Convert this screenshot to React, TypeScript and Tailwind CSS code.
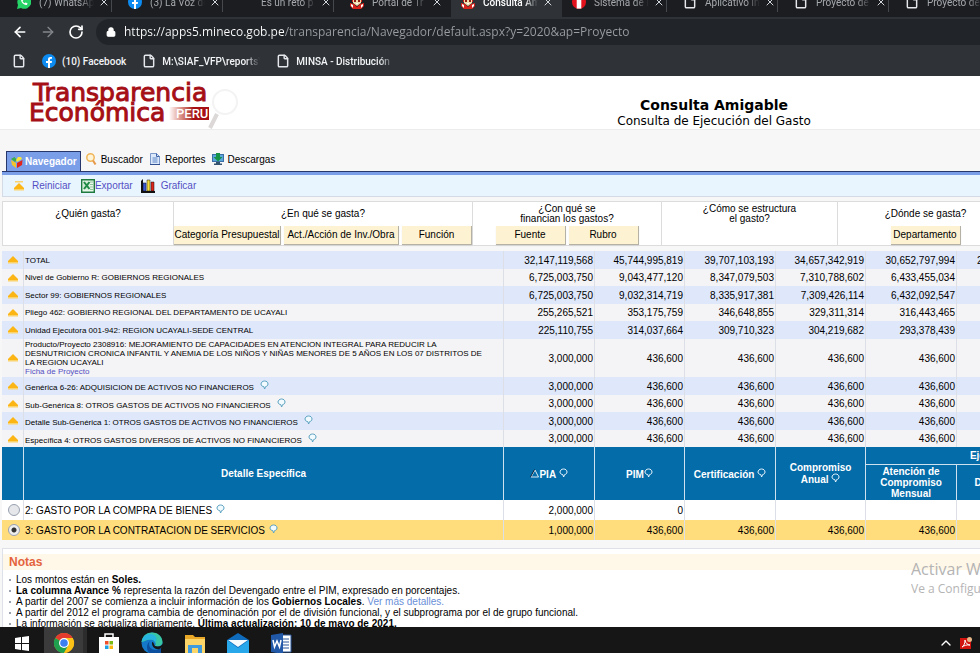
import type { ReactNode } from 'react'
import { ArrowLeft, ArrowRight, ChevronUp, File, Lock, RotateCw, X } from 'lucide-react'
import clsx from 'clsx'

/**
 * ICONS
 */
function WhatsappIcon() {
  return (
    <svg viewBox="0 0 14 14" className="size-3.5">
      <path d="M0 14l1-4A7 6.700 0 1 1 4 13z" fill="#25d366" />
      <path d="M4 4c0 4 3 6 6 6l.5-1.800-2-.8-.8.8C6.500 7.500 6 7 5.500 6l.8-.8-.8-2z" fill="#fff" />
    </svg>
  )
}

function FacebookIcon() {
  return (
    <svg viewBox="0 0 14 14" className="size-3.5">
      <circle cx="7" cy="7" r="7" fill="#0d8bf0" />
      <path d="M6 14V9H4V7h2V5.500C6 3.700 7 3 8.300 3H10v1.800H9c-.7 0-1 .3-1 .9V7h2l-.3 2H8v5z" fill="#fff" />
    </svg>
  )
}

function CrestIcon() {
  return (
    <svg viewBox="0 0 14 14" className="size-3.5">
      <path d="M2 0h10v7H2z" fill="#d9241c" />
      <path d="M3 4h8v4l-4 3-4-3z" fill="#f0dfae" />
      <path d="M4 5h2v2H4zM8 5h2v2H8z" fill="#8e1d16" />
      <path d="M0 8l4 1 3 3 3-3 4-1v3l-3 3H3l-3-3z" fill="#d9241c" />
      <path d="M1 9l2 1v3l-2-2zM13 9l-2 1v3l2-2zM6 8h2v1H6z" fill="#fff" />
    </svg>
  )
}

function PeruIcon() {
  return (
    <svg viewBox="0 0 14 14" className="size-3.5">
      <circle cx="7" cy="7" r="7" fill="#e3111b" />
      <path d="M4.700.4h4.600v13.200H4.700z" fill="#fff" />
    </svg>
  )
}

function PageIcon() {
  return <File className="size-3.5 text-gray-200" strokeWidth={2.500} />
}

function UpIcon() {
  return (
    <svg viewBox="0 0 12 10" className="h-2.5 w-3 shrink-0">
      <path d="M6 1l5 5v1H1V6z" fill="#fbb615" />
      <path d="M1 7h10v1.500H1z" fill="#fbd36d" />
    </svg>
  )
}

function ResetIcon() {
  return (
    <svg viewBox="0 0 12 10" className="h-2.5 w-3 shrink-0">
      <path d="M2 0h8v1.500H2z" fill="#fbd36d" />
      <path d="M6 2l5 5v1H1V7z" fill="#fbb615" />
      <path d="M1 8h10v1.500H1z" fill="#fbd36d" />
    </svg>
  )
}

function Balloon({ light = false }: { light?: boolean }) {
  return (
    <svg viewBox="0 0 9 10" className="inline-block h-2.5 w-[9px] shrink-0 align-baseline">
      <path
        d="M4.500 1C6.500 1 8 2.200 8 4S6.500 6.500 5.600 6.600L4.600 9 3.800 6.600C2.300 6.500 1 5.500 1 4s1.500-3 3.500-3z"
        fill={light ? 'none' : '#f2fbff'}
        stroke={light ? '#e8f4fd' : '#5ba2c0'}
      />
    </svg>
  )
}

function CubeIcon() {
  return (
    <svg viewBox="0 0 12 12" className="size-3">
      <path d="M3.500 1L6 4 4 6 0 3z" fill="#3cae49" />
      <path d="M7 1h3l1 2-5 3-1-2z" fill="#f7e53b" />
      <path d="M0 4l5 3v5L1 9z" fill="#f4c52b" />
      <path d="M11.500 4L6 7v5l5-3z" fill="#e2231a" />
    </svg>
  )
}

function SearchIcon() {
  return (
    <svg viewBox="0 0 12 12" className="size-3">
      <circle cx="5.500" cy="4.500" r="3.700" fill="#fff4d8" stroke="#f0b659" strokeWidth="1.500" />
      <path d="M8 7.500l2.500 4" stroke="#e79a4a" strokeWidth="2" />
    </svg>
  )
}

function ReportIcon() {
  return (
    <svg viewBox="0 0 12 12" className="size-3">
      <path d="M1.500.5h6l3 3v8h-9z" fill="#dbe9fb" stroke="#7d99c9" />
      <path d="M7.500.5v3h3" fill="none" stroke="#3f62a6" />
      <path d="M3.500 5h5M3.500 7h5M3.500 9h5" stroke="#5c86c6" />
      <path d="M1 11.500h10" stroke="#2f4f8f" />
    </svg>
  )
}

function DownloadIcon() {
  return (
    <svg viewBox="0 0 12 12" className="size-3">
      <path d="M0 1h12v8H0z" fill="#3c6ea6" />
      <path d="M1 2h10v6H1z" fill="#5aa5dc" />
      <path d="M4 0h4v4h2.500L6 8.500 1.500 4H4z" fill="#159447" />
      <path d="M4 9h4v1.500h2V12H2v-1.500h2z" fill="#35536f" />
    </svg>
  )
}

function ExcelIcon() {
  return (
    <svg viewBox="0 0 14 14" className="size-3.5">
      <path d="M.7.7h12.600v12.600H.7z" fill="#e9f6ea" stroke="#1f7a3f" strokeWidth="1.400" />
      <path d="M9 3h3M9 5.500h3M9 8h3M9 10.500h3" stroke="#8fc79b" />
      <path d="M2 2.500h6.500v8H2z" fill="#d3ecd6" />
      <path d="M3 3l5.500 7M8.500 3L3 10" stroke="#1f8a45" strokeWidth="2" />
    </svg>
  )
}

function ChartIcon() {
  return (
    <svg viewBox="0 0 14 14" className="size-3.5">
      <path d="M0 2l2-2v12h12v2H0z" fill="#111" />
      <path d="M2 4h3v8H2z" fill="#3857d6" stroke="#111" strokeWidth=".5" />
      <path d="M6 1h3v11H6z" fill="#f5de3b" stroke="#111" strokeWidth=".5" />
      <path d="M10 3h3v9h-3z" fill="#dd2418" stroke="#111" strokeWidth=".5" />
    </svg>
  )
}

/**
 * BROWSER CHROME
 */
const browserTabs: { title: string; icon: ReactNode; active?: boolean }[] = [
  { title: '(7) WhatsApp', icon: <WhatsappIcon /> },
  { title: '(3) La Voz de', icon: <FacebookIcon /> },
  { title: 'Es un reto p', icon: null },
  { title: 'Portal de Tr', icon: <CrestIcon /> },
  { title: 'Consulta Am', icon: <CrestIcon />, active: true },
  { title: 'Sistema de I', icon: <PeruIcon /> },
  { title: 'Aplicativo In', icon: <PageIcon /> },
  { title: 'Proyecto de', icon: <PageIcon /> },
  { title: 'Proyecto de', icon: <PageIcon /> },
]

function BrowserTabs() {
  return (
    <div className="flex h-[17px] shrink-0 items-end overflow-hidden bg-[#1b1d21] pl-[7px]">
      {browserTabs.map((tab, i) => (
        <div
          key={i}
          className={clsx(
            'flex h-[30px] w-[111px] shrink-0 items-center pr-1.5 pl-2.5 text-[10px]',
            tab.active ? 'rounded-t-lg bg-[#2f3338] font-medium text-white' : 'text-[#a6a9ad]'
          )}
        >
          <span className="mr-2 w-3.5 shrink-0">{tab.icon}</span>
          <span className="w-[55px] overflow-hidden whitespace-nowrap [mask-image:linear-gradient(90deg,#000_75%,transparent)]">
            {tab.title}
          </span>
          <button aria-label="Cerrar" className="ml-1 text-gray-300">
            <X className="size-3" />
          </button>
          {!tab.active && i !== 3 && <span className="ml-auto h-5 w-px shrink-0 bg-[#45484c]" />}
        </div>
      ))}
    </div>
  )
}

function AddressBar() {
  return (
    <div className="flex h-[30px] shrink-0 items-center bg-[#2f3338] pl-3 text-white">
      <button aria-label="Atrás" className="mr-3">
        <ArrowLeft className="size-4" strokeWidth={2.500} />
      </button>
      <button aria-label="Adelante" className="mr-3 text-[#84878b]">
        <ArrowRight className="size-4" strokeWidth={2} />
      </button>
      <button aria-label="Recargar" className="mr-3">
        <RotateCw className="size-4" strokeWidth={2.500} />
      </button>
      <div className="flex h-[26px] flex-1 items-center rounded-l-full bg-[#212529] pl-2.5">
        <Lock className="mr-2 size-2.5" fill="#fff" strokeWidth={3} />
        <input
          aria-label="Dirección"
          readOnly
          value="https://apps5.mineco.gob.pe/transparencia/Navegador/default.aspx?y=2020&ap=Proyecto"
          className="flex-1 bg-[linear-gradient(90deg,#ffffff_160px,#9a9ea2_160px)] bg-clip-text font-['Open_Sans'] text-xs text-transparent outline-none"
        />
      </div>
    </div>
  )
}

function Bookmarks() {
  return (
    <div className="flex h-[29px] shrink-0 items-center gap-4 bg-[#2f3338] pb-px pl-3 text-[10px] font-medium text-gray-100">
      <a href="#" aria-label="Marcador">
        <PageIcon />
      </a>
      <a href="#" className="flex items-center gap-1.5">
        <FacebookIcon />
        (10) Facebook
      </a>
      <a href="#" className="flex items-center gap-1.5">
        <PageIcon />
        <span className="w-[98px] overflow-hidden whitespace-nowrap [mask-image:linear-gradient(90deg,#000_85%,transparent)]">
          M:\SIAF_VFP\reports\
        </span>
      </a>
      <a href="#" className="flex items-center gap-1.5">
        <PageIcon />
        <span className="w-[98px] overflow-hidden whitespace-nowrap [mask-image:linear-gradient(90deg,#000_85%,transparent)]">
          MINSA - Distribución
        </span>
      </a>
    </div>
  )
}

/**
 * SITE HEADER
 */
function SiteHeader() {
  return (
    <header className="flex h-[54px] border-b border-[#ececec] bg-white">
      <div className="w-[448px] pt-[7px] pl-[29px]">
        <div className="relative w-[210px] font-['DejaVu_Sans'] text-[25px] leading-5 text-[#a50f15]">
          <svg viewBox="0 0 36 46" className="absolute top-1 left-[174px] h-[46px] w-9" fill="none">
            <circle cx="22" cy="15" r="12" stroke="#f3f3f3" strokeWidth="2" />
            <path d="M14 27L7 41" stroke="#dcd8d8" strokeWidth="4" />
          </svg>
          <div className="relative pl-1 [-webkit-text-stroke:1px_#a50f15]">Transparencia</div>
          <div className="relative flex items-center">
            <span className="[-webkit-text-stroke:1px_#a50f15]">Económica</span>
            <span className="ml-1 w-10 shrink-0 bg-linear-to-r from-white to-[#a50f15] to-60% pr-px text-right font-['Roboto'] text-[13px] leading-[13px] font-medium text-white">
              PERU
            </span>
          </div>
        </div>
      </div>
      <div className="flex-1 pt-5 text-center font-['DejaVu_Sans'] text-black">
        <h1 className="text-sm leading-[18px] font-bold">Consulta Amigable</h1>
        <p className="text-xs leading-[14px]">Consulta de Ejecución del Gasto</p>
      </div>
    </header>
  )
}

const sections = [
  { label: 'Buscador', icon: <SearchIcon /> },
  { label: 'Reportes', icon: <ReportIcon /> },
  { label: 'Descargas', icon: <DownloadIcon /> },
]

function SectionTabs() {
  return (
    <nav className="mt-[21px] ml-0.5">
      <div className="flex items-end border-b border-[#27366b] pl-1">
        <a
          href="#"
          className="flex h-5 items-center gap-0.5 border border-b-0 border-[#27366b] bg-[#7b9ee8] pr-[3px] pl-1 text-[10px] font-bold text-white"
        >
          <CubeIcon />
          Navegador
        </a>
        {sections.map(({ label, icon }) => (
          <a key={label} href="#" className="flex h-5 items-center gap-1 pr-0.5 pb-1 pl-1 text-[10px] text-black">
            {icon}
            {label}
          </a>
        ))}
      </div>
      <div className="h-[3px] bg-[#7b9ee8]" />
      <div className="flex h-[22px] items-center border-b border-l border-[#d5dbe4] bg-[#e9f5fe] pl-2.5 text-[10px] text-[#5450c4]">
        <a href="#" className="mr-2.5 flex items-center gap-[7px]">
          <ResetIcon />
          Reiniciar
        </a>
        <a href="#" className="mr-2 flex items-center">
          <ExcelIcon />
          Exportar
        </a>
        <a href="#" className="flex items-center gap-1.5">
          <ChartIcon />
          Graficar
        </a>
      </div>
    </nav>
  )
}

/**
 * QUESTIONS
 */
const questions = [
  { width: 'w-[171px]', lines: ['¿Quién gasta?'], buttons: [] },
  {
    width: 'w-[299px]',
    lines: ['¿En qué se gasta?'],
    buttons: [
      { label: 'Categoría Presupuestal', width: 'w-[107px]' },
      { label: 'Act./Acción de Inv./Obra', width: 'w-[115px]' },
      { label: 'Función', width: 'w-[70px]' },
    ],
  },
  {
    width: 'w-[189px]',
    lines: ['¿Con qué se', 'financian los gastos?'],
    buttons: [
      { label: 'Fuente', width: 'w-[70px]' },
      { label: 'Rubro', width: 'w-[70px]' },
    ],
  },
  { width: 'w-[176px]', lines: ['¿Cómo se estructura', 'el gasto?'], buttons: [] },
  { width: 'w-[176px]', lines: ['¿Dónde se gasta?'], buttons: [{ label: 'Departamento', width: 'w-[70px]' }] },
]

function Questions() {
  return (
    <div className="mt-1 ml-0.5 flex h-[45px] border-y border-l border-[#dcdcdc] bg-white text-[10px] leading-[10px] text-black">
      {questions.map(({ width, lines, buttons }) => (
        <div key={lines[0]} className={clsx('shrink-0 border-r border-[#dcdcdc] text-center', width)}>
          <div className="flex h-6 flex-col justify-center">
            {lines.map((line) => (
              <span key={line}>{line}</span>
            ))}
          </div>
          <div className="flex justify-center gap-[3px]">
            {buttons.map((button) => (
              <button
                key={button.label}
                className={clsx(
                  'h-[19px] border-r border-b border-[#b5b1a4] bg-[#fdf3d3] whitespace-nowrap shadow-xs',
                  button.width
                )}
              >
                {button.label}
              </button>
            ))}
          </div>
        </div>
      ))}
    </div>
  )
}

/**
 * BUDGET TABLE
 */
type Row = { label: string; values: string[]; balloon?: boolean; link?: string }

const project = ['3,000,000', '436,600', '436,600', '436,600', '436,600']

const rows: Row[] = [
  {
    label: 'TOTAL',
    values: ['32,147,119,568', '45,744,995,819', '39,707,103,193', '34,657,342,919', '30,652,797,994'],
  },
  {
    label: 'Nivel de Gobierno R: GOBIERNOS REGIONALES',
    values: ['6,725,003,750', '9,043,477,120', '8,347,079,503', '7,310,788,602', '6,433,455,034'],
  },
  {
    label: 'Sector 99: GOBIERNOS REGIONALES',
    values: ['6,725,003,750', '9,032,314,719', '8,335,917,381', '7,309,426,114', '6,432,092,547'],
  },
  {
    label: 'Pliego 462: GOBIERNO REGIONAL DEL DEPARTAMENTO DE UCAYALI',
    values: ['255,265,521', '353,175,759', '346,648,855', '329,311,314', '316,443,465'],
  },
  {
    label: 'Unidad Ejecutora 001-942: REGION UCAYALI-SEDE CENTRAL',
    values: ['225,110,755', '314,037,664', '309,710,323', '304,219,682', '293,378,439'],
  },
  {
    label:
      'Producto/Proyecto 2308916: MEJORAMIENTO DE CAPACIDADES EN ATENCION INTEGRAL PARA REDUCIR LA DESNUTRICION CRONICA INFANTIL Y ANEMIA DE LOS NIÑOS Y NIÑAS MENORES DE 5 AÑOS EN LOS 07 DISTRITOS DE LA REGION UCAYALI',
    values: project,
    link: 'Ficha de Proyecto',
  },
  { label: 'Genérica 6-26: ADQUISICION DE ACTIVOS NO FINANCIEROS', values: project, balloon: true },
  { label: 'Sub-Genérica 8: OTROS GASTOS DE ACTIVOS NO FINANCIEROS', values: project, balloon: true },
  { label: 'Detalle Sub-Genérica 1: OTROS GASTOS DE ACTIVOS NO FINANCIEROS', values: project, balloon: true },
  { label: 'Específica 4: OTROS GASTOS DIVERSOS DE ACTIVOS NO FINANCIEROS', values: project, balloon: true },
]

const details = [
  { label: '2: GASTO POR LA COMPRA DE BIENES', values: ['2,000,000', '0', '', '', ''], selected: false },
  {
    label: '3: GASTO POR LA CONTRATACION DE SERVICIOS',
    values: ['1,000,000', '436,600', '436,600', '436,600', '436,600'],
    selected: true,
  },
]

const headCell = 'border-r border-white/80 font-bold'

function BudgetTable() {
  return (
    <table className="mt-[5px] ml-0.5 w-[1119px] table-fixed border-separate border-spacing-0 text-[10px] leading-[11px] text-black">
      <colgroup>
        <col className="w-[22px]" />
        <col className="w-[480px]" />
        <col className="w-[91px]" />
        <col className="w-[90px]" />
        <col className="w-[91px]" />
        <col className="w-[90px]" />
        <col className="w-[91px]" />
        <col className="w-[90px]" />
        <col className="w-[74px]" />
      </colgroup>
      <tbody>
        {rows.map(({ label, values, balloon, link }, i) => (
          <tr key={label} className={clsx(link ? 'h-[38px]' : 'odd:h-[18px] even:h-[17px]', 'odd:bg-[#dfe8fa] even:bg-[#f4f3f5]')}>
            <td className="border-r border-[#dcdfe6] pl-[5px]">
              <UpIcon />
            </td>
            <td className="border-r border-[#dcdfe6] pr-4 pl-px text-[8px] leading-[9px]">
              {label}
              {balloon && (
                <span className="ml-1.5">
                  <Balloon />
                </span>
              )}
              {link && (
                <a href="#" className="block text-[#5450c4]">
                  {link}
                </a>
              )}
            </td>
            {values.map((value, n) => (
              <td key={n} className="border-r border-[#dcdfe6] pr-px text-right">
                {value}
              </td>
            ))}
            <td className="pl-5">{i === 0 && '2'}</td>
            <td />
          </tr>
        ))}
        <tr className="h-[18px] bg-[#046ca9] text-white">
          <th rowSpan={2} className={headCell} />
          <th rowSpan={2} className={headCell}>
            Detalle Específica
          </th>
          <th rowSpan={2} className={headCell}>
            <svg viewBox="0 0 9 9" className="inline-block size-[9px] align-baseline">
              <path d="M5 1l3.500 7H1z" fill="none" stroke="#dcecf6" />
              <path d="M4.500.5L.5 8" stroke="#10243a" />
            </svg>
            PIA <Balloon light />
          </th>
          <th rowSpan={2} className={headCell}>
            PIM
            <Balloon light />
          </th>
          <th rowSpan={2} className={headCell}>
            Certificación <Balloon light />
          </th>
          <th rowSpan={2} className={headCell}>
            Compromiso
            <br />
            Anual <Balloon light />
          </th>
          <th colSpan={3} className="border-b border-white/80 font-bold">
            Ejecución
          </th>
        </tr>
        <tr className="h-[35px] bg-[#046ca9] text-white">
          <th className={headCell}>Atención de Compromiso Mensual</th>
          <th className={headCell}>Devengado</th>
          <th className="font-bold">Girado</th>
        </tr>
        {details.map(({ label, values, selected }) => (
          <tr key={label} className={clsx('h-5', selected ? 'bg-[#ffdc7c]' : 'bg-white')}>
            <td className={clsx('border-r pl-1.5', selected ? 'border-[#ffdc7c]' : 'border-[#dcdfe6]')}>
              <input
                type="radio"
                name="detalle"
                aria-label={label}
                defaultChecked={selected}
                className="block size-3 appearance-none rounded-full border border-gray-400 bg-gray-200 checked:bg-[radial-gradient(circle,#333_2px,#eee_3px)]"
              />
            </td>
            <td className="border-r border-[#dcdfe6] pl-px">
              {label}
              <span className="ml-1">
                <Balloon />
              </span>
            </td>
            {values.map((value, n) => (
              <td key={n} className="border-r border-[#dcdfe6] pr-px text-right">
                {value}
              </td>
            ))}
            <td />
            <td />
          </tr>
        ))}
      </tbody>
    </table>
  )
}

/**
 * NOTES
 */
function Notes() {
  return (
    <section className="mt-2 ml-0.5 border-t border-l border-[#dfe1e8] bg-white pt-[5px] pb-8 text-black">
      <h2 className="bg-[#fff7e8] pl-1.5 text-xs leading-4 font-bold text-[#e4633e]">Notas</h2>
      <ul className="list-none pt-1 pl-1.5 text-[10px] leading-[11px] [&>li]:flex [&>li]:items-center [&>li]:before:mr-[5px] [&>li]:before:size-0.5 [&>li]:before:bg-gray-400">
        <li>
          <span>
            Los montos están en <b>Soles.</b>
          </span>
        </li>
        <li>
          <span>
            <b>La columna Avance %</b> representa la razón del Devengado entre el PIM, expresado en porcentajes.
          </span>
        </li>
        <li>
          <span>
            A partir del 2007 se comienza a incluir información de los <b>Gobiernos Locales</b>.{' '}
            <a href="#" className="text-[#6a8fd8]">
              Ver más detalles.
            </a>
          </span>
        </li>
        <li>
          <span>
            A partir del 2012 el programa cambia de denominación por el de división funcional, y el subprograma por el de
            grupo funcional.
          </span>
        </li>
        <li>
          <span>
            La información se actualiza diariamente. <b>Última actualización: 10 de mayo de 2021.</b>
          </span>
        </li>
      </ul>
    </section>
  )
}

/**
 * TASKBAR
 */
const apps = [
  {
    name: 'Inicio',
    icon: (
      <path d="M3 6l6-1v6H3zM10 5l7-1v7h-7zM3 12h6v6l-6-1zM10 12h7v7l-7-1z" fill="#fff" />
    ),
  },
  {
    name: 'Chrome',
    active: true,
    icon: (
      <>
        <circle cx="11" cy="11" r="10" fill="#fbc116" />
        <path d="M11 11L2.300 6A10 10 0 0 1 19.700 6z" fill="#e33b2e" />
        <path d="M11 11L2.300 6a10 10 0 0 0 8.700 15l4-7z" fill="#1fa04f" />
        <path d="M11 6h8.700A10 10 0 0 1 11 21l4.500-7.500z" fill="#fbc116" />
        <circle cx="11" cy="11" r="5" fill="#fff" />
        <circle cx="11" cy="11" r="3.800" fill="#3c7ff0" />
      </>
    ),
  },
  {
    name: 'Store',
    icon: (
      <>
        <path d="M7 6V2h8v4" fill="none" stroke="#fff" strokeWidth="1.500" />
        <path d="M1 5h20v17H1z" fill="#fff" />
        <path d="M7 9h3.500v3.500H7z" fill="#f0502a" />
        <path d="M11.500 9H15v3.500h-3.500z" fill="#7cb913" />
        <path d="M7 13.500h3.500V17H7z" fill="#1da2e8" />
        <path d="M11.500 13.500H15V17h-3.500z" fill="#fbb60f" />
      </>
    ),
  },
  {
    name: 'Edge',
    icon: (
      <>
        <circle cx="11" cy="11" r="10.500" fill="#1479c9" />
        <path d="M.6 10C2-3 21-2 21.500 10c0 4-4 5-7.500 4 2-3-1-7-5-6.500C5 8 2 10 .6 10z" fill="#38c6a4" />
        <path d="M.6 10C2 2 9 .5 13 3c5 3 1 8 1 8 0-3-3-4-5-3.500C5 8 2 8 .6 10z" fill="#27b4e0" />
        <path d="M9 9c-2 3-1 7 3 8.500 3 1 6 0 8-1.500v6H9C5 18 5 12 9 9z" fill="#0c4f9e" />
        <path d="M11 10c2 0 2 3 3 4 3 1 6 .5 7.500-2v3l-3 2c-4 1-8-2-7.500-7z" fill="#161616" />
      </>
    ),
  },
  {
    name: 'Explorador',
    icon: (
      <>
        <path d="M1 3h8l2 2h10v16H1z" fill="#e9a828" />
        <path d="M1 7h20v14H1z" fill="#fcd568" />
        <path d="M4 13h14v8H4z" fill="#3f9ade" />
        <path d="M8 16h6v5H8z" fill="#fcd568" />
      </>
    ),
  },
  {
    name: 'Correo',
    icon: (
      <>
        <path d="M0 8l11-7 11 7v13H0z" fill="#0f6cbd" />
        <path d="M0 8l11 8 11-8v13H0z" fill="#28a8ea" />
        <path d="M1 8h20l-10 7z" fill="#f5fbff" />
      </>
    ),
  },
  {
    name: 'Word',
    icon: (
      <>
        <path d="M11 3h10v17H11z" fill="#fff" stroke="#2b579a" />
        <path d="M13 7h6M13 10h6M13 13h6M13 16h6" stroke="#2b579a" />
        <path d="M1 3l12-2v21L1 20z" fill="#2258a8" />
        <path d="M3 8l1.500 7L7 9l2.500 6L11 8" fill="none" stroke="#fff" strokeWidth="1.500" />
      </>
    ),
  },
]

function Taskbar() {
  return (
    <footer className="flex h-[26px] shrink-0 items-start overflow-hidden bg-[#161616] pl-px">
      {apps.map(({ name, icon, active }) => (
        <button
          key={name}
          aria-label={name}
          className={clsx('flex h-8 w-[43px] shrink-0 justify-center pt-[5px]', active && 'border-r-4 border-[#2c2c2c] bg-[#3b3b3b]')}
        >
          <svg viewBox="0 0 22 22" className="size-[22px] shrink-0">
            {icon}
          </svg>
        </button>
      ))}
      <div className="ml-auto flex items-center gap-1.5 pt-2 pr-2">
        <ChevronUp className="size-4 text-white" />
        <svg viewBox="0 0 12 12" className="size-3">
          <path d="M0 1h11v11H0z" fill="#d3130d" />
          <path d="M2 10c2-1 3-4 3-7 0 3 3 5 5 5-3-.5-6 .5-8 2z" fill="none" stroke="#fff" />
          <circle cx="9.500" cy="2.500" r="2.500" fill="#e8b889" />
        </svg>
      </div>
    </footer>
  )
}

export default function App() {
  return (
    <div className="flex h-screen flex-col overflow-hidden bg-[#f7f7f8] font-['Liberation_Sans',sans-serif]">
      <div className="font-['Roboto',sans-serif]">
        <BrowserTabs />
        <AddressBar />
        <Bookmarks />
      </div>
      <main className="relative min-h-0 flex-1 overflow-hidden">
        <SiteHeader />
        <SectionTabs />
        <Questions />
        <BudgetTable />
        <Notes />
        {/* Windows activation watermark */}
        <div className="absolute right-0 bottom-7 w-[69px] overflow-hidden font-['Open_Sans'] whitespace-nowrap text-[#b4b4b4]">
          <p className="text-base leading-5">Activar Windows</p>
          <p className="text-xs leading-5">Ve a Configuración</p>
        </div>
      </main>
      <Taskbar />
    </div>
  )
}
